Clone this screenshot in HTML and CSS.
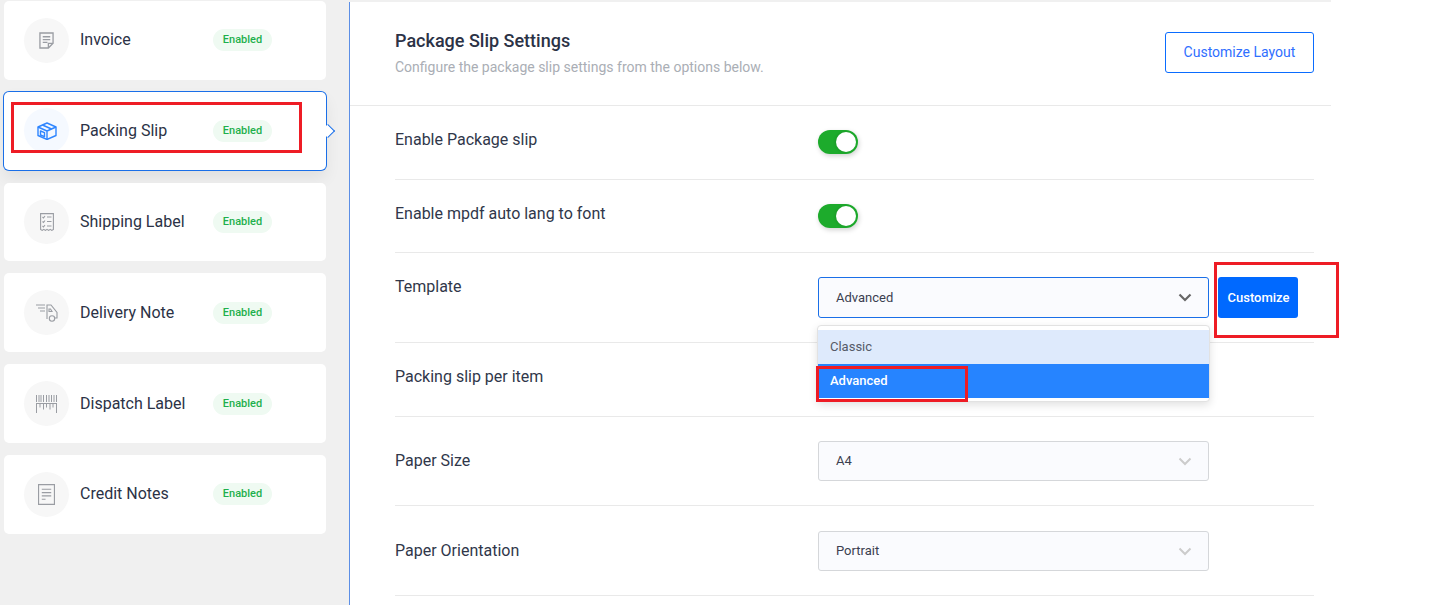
FILE: index.html
```html
<!DOCTYPE html>
<html lang="en">
<head>
<meta charset="utf-8">
<title>Package Slip Settings</title>
<link rel="stylesheet" href="styles.css">
</head>
<body>
<div class="page">
  <aside class="sidebar">
    <div class="card">
      <span class="icon"><svg viewBox="0 0 16 18" width="15" height="17" fill="none" stroke="#9a9da3" stroke-width="1.4"><path d="M1 1h14v11l-5 5H1z"/><path d="M4 5h8M4 8h8M4 11h5" /><path d="M10 17v-5h5"/></svg></span>
      <span class="name">Invoice</span><span class="badge">Enabled</span>
    </div>
    <div class="card active">
      <span class="icon"><svg viewBox="0 0 20 18" width="20" height="18" fill="none" stroke="#2f86ff" stroke-width="1.4" stroke-linejoin="round"><path d="M1 5l9-4 9 4v8.500l-9 4-9-4z"/><path d="M1 5l9 4 9-4M10 9v8.500"/><path d="M5.500 3l9 4"/><path d="M3.500 9l4 1.700v4l-4-1.700z"/></svg></span>
      <span class="name">Packing Slip</span><span class="badge">Enabled</span>
    </div>
    <div class="card">
      <span class="icon"><svg viewBox="0 0 14 18" width="14" height="18" fill="none" stroke="#9a9da3" stroke-width="1.1"><path d="M.6.6h12.800v15.800l-1.600 1-1.600-1-1.600 1-1.600-1-1.600 1-1.600-1-1.600 1-1.600-1z"/><path d="M7 4h4.500M7 8.500h4.500M7 13h4.500M2.500 4l1 1 1.500-2M2.500 8.500l1 1 1.500-2M2.500 13l1 1 1.500-2"/></svg></span>
      <span class="name">Shipping Label</span><span class="badge">Enabled</span>
    </div>
    <div class="card">
      <span class="icon"><svg viewBox="0 0 22 18" width="22" height="18" fill="none" stroke="#9a9da3" stroke-width="1.100"><path d="M0 1h9M2 4h7M4 7h5"/><path d="M11 15V1h4l6 7.500V14h-2"/><path d="M13 5h1.500l1.500 2.500h-3z"/><circle cx="16" cy="14.500" r="2.700"/></svg></span>
      <span class="name">Delivery Note</span><span class="badge">Enabled</span>
    </div>
    <div class="card">
      <span class="icon"><svg viewBox="0 0 21 18" width="21" height="18" fill="none" stroke="#9a9da3" stroke-width="1"><path d="M.5 0v7M3 0v7M5 0v7M7.500 0v7M10.500 0v7M13 0v7M15.500 0v7M18 0v7M20.500 0v7"/><path d="M0 8.500h21"/><path d="M.5 8.500V18M20.500 8.500V18M4 8.500v4M7.500 8.500v6M10.500 8.500v4M14 8.500v6M17 8.500v4"/></svg></span>
      <span class="name">Dispatch Label</span><span class="badge">Enabled</span>
    </div>
    <div class="card">
      <span class="icon"><svg viewBox="0 0 18 22" width="17" height="21" fill="none" stroke="#9a9da3" stroke-width="1.200"><path d="M.6.6h16.800v20.800H.6z"/><path d="M4 5.500h10M4 9h10M4 12.500h10M4 16h4"/></svg></span>
      <span class="name">Credit Notes</span><span class="badge">Enabled</span>
    </div>
  </aside>

  <main class="panel">
    <header class="head">
      <div>
        <h1 class="title">Package Slip Settings</h1>
        <p class="sub">Configure the package slip settings from the options below.</p>
      </div>
      <button class="outline">Customize Layout</button>
    </header>
    <div class="rows">
      <div class="row r-toggle"><span class="label">Enable Package slip</span><span class="toggle"></span></div>
      <div class="row r-toggle2"><span class="label">Enable mpdf auto lang to font</span><span class="toggle"></span></div>
      <div class="row r-template">
        <span class="label">Template</span>
        <div class="control">
          <div class="select open">Advanced<svg class="chev" viewBox="0 0 14 9" width="14" height="9"><path d="M1.500 1.500L7 7l5.500-5.500" fill="none" stroke="#666" stroke-width="2.200"/></svg></div>
          <button class="solid">Customize</button>
          <div class="menu">
            <div class="opt hover">Classic</div>
            <div class="opt sel">Advanced</div>
          </div>
        </div>
      </div>
      <div class="row r-item"><span class="label">Packing slip per item</span></div>
      <div class="row r-size">
        <span class="label">Paper Size</span>
        <div class="select">A4<svg class="chev" viewBox="0 0 14 9" width="14" height="9"><path d="M1.500 1.500L7 7l5.500-5.500" fill="none" stroke="#ccc" stroke-width="2"/></svg></div>
      </div>
      <div class="row r-orient">
        <span class="label">Paper Orientation</span>
        <div class="select">Portrait<svg class="chev" viewBox="0 0 14 9" width="14" height="9"><path d="M1.500 1.500L7 7l5.500-5.500" fill="none" stroke="#ccc" stroke-width="2"/></svg></div>
      </div>
    </div>
  </main>

  <i class="mark m1"></i>
  <i class="mark m2"></i>
  <i class="mark m3"></i>
</div>
</body>
</html>
```

FILE: styles.css
```css
* { box-sizing: border-box; }
html, body { margin: 0; height: 100%; background: #fff; }
body { font-family: Roboto, "Liberation Sans", sans-serif; color: #2b3246; overflow: hidden; }
.page { position: relative; display: flex; width: 1451px; height: 605px; overflow: hidden; }

.sidebar {
  position: relative; width: 350px; height: 605px; flex: none;
  background: #f0f0f0;
  padding: 1px 0 0 4px;
  display: flex; flex-direction: column; gap: 12px;
}
.sidebar::after {
  content: ""; position: absolute; right: 0; top: 2px; bottom: 0; width: 1px; background: #5c8fe6;
}
.card {
  position: relative; width: 322px; height: 78.800px; flex: none;
  background: #fff; border-radius: 5px;
  display: flex; align-items: center; padding-left: 20px;
}
.card.active {
  height: 78px; margin-bottom: .8px;
  box-shadow: 0 0 0 1px #1a6fe8, 0 8px 16px rgba(0,0,0,.07);
}
.card.active::after {
  content: ""; position: absolute; right: -6.500px; top: 34.500px;
  width: 9px; height: 9px; background: #fff;
  border-top: 1px solid #1a6fe8; border-right: 1px solid #1a6fe8;
  transform: rotate(45deg);
}
.icon {
  width: 45px; height: 45px; flex: none; border-radius: 50%;
  background: #f7f7f7; display: flex; align-items: center; justify-content: center;
}
.active .icon { background: #f5f9ff; }
.name { width: 144px; padding-left: 11px; font-size: 16px; line-height: 20px; flex: none; }
.badge {
  width: 59px; height: 22px; border-radius: 11px; background: #effaf2; color: #1eb04c;
  font-size: 11px; font-weight: 500; line-height: 21px; text-align: center; flex: none;
}

.panel { width: 981px; flex: none; border-top: 2px solid #f0f0f0; }
.head {
  height: 104px; padding: 29px 17px 0 45px; border-bottom: 1px solid #e9e9e9;
  display: flex; justify-content: space-between; align-items: flex-start;
}
.title { margin: 0; font-size: 18px; font-weight: 500; line-height: 20px; color: #2b3246; }
.sub { margin: 7px 0 0; font-size: 14px; line-height: 18px; color: #aaaeb5; }
.outline {
  width: 149px; height: 41px; margin-top: 1px; padding: 0 0 2px; background: #fff; border: 1px solid #0a6cff; border-radius: 3px;
  color: #2f6fff; font: 400 14px Roboto, sans-serif;
}

.rows { margin: 0 17px 0 45px; }
.row {
  display: grid; grid-template-columns: 423px 391px; align-items: start;
  border-bottom: 1px solid #e9e9e9; padding-top: 24px;
}
.r-toggle { height: 74px; }
.r-toggle2 { height: 73px; }
.r-template { height: 90px; }
.r-item { height: 74px; }
.r-size { height: 89px; }
.r-orient { height: 90px; padding-top: 25px; }
.label { font-size: 16px; line-height: 20px; color: #30374a; }
.r-size .label, .r-orient .label { padding-top: 10px; }

.toggle {
  position: relative; display: block; width: 40px; height: 24px; border-radius: 12px; background: #1dab2c;
  box-shadow: 1px 2px 5px rgba(0,0,0,.18);
}
.toggle::after {
  content: ""; position: absolute; right: 2px; top: 2px; width: 20px; height: 20px;
  border-radius: 50%; background: #fff; box-shadow: -1px 0 3px rgba(0,0,0,.12);
}

.control { position: relative; display: flex; gap: 9px; width: 480px; }
.select {
  position: relative; width: 391px; height: 40px; flex: none;
  background: #fafbfe; border: 1px solid #d5d7da; border-radius: 3px;
  padding-left: 17px; font-size: 13px; line-height: 38px; color: #3a4050;
}
.select.open { height: 41px; border-color: #1a6fe8; line-height: 39px; }
.chev { position: absolute; right: 16px; top: 15px; }
.solid {
  width: 80px; height: 41px; flex: none; background: #0069ff; border: 0; border-radius: 3px; padding: 0 0 0 1px;
  color: #fff; font: 500 13px Roboto, sans-serif;
}
.menu {
  position: absolute; left: -1px; top: 48px; width: 393px; height: 77px; z-index: 2;
  background: #fff; border: 1px solid #e2e2e2; border-radius: 4px; padding: 4px 0;
  box-shadow: 0 3px 8px rgba(0,0,0,.12);
}
.opt { height: 34px; padding-left: 12px; font-size: 13px; line-height: 34px; }
.opt.hover { background: #deeafc; color: #555b68; }
.opt.sel { background: #2684ff; color: #fff; font-weight: 500; }

.mark { position: absolute; z-index: 3; border: 3px solid #ee1c25; display: block; }
.m1 { left: 11px; top: 102px; width: 291px; height: 51px; }
.m2 { left: 1214px; top: 262px; width: 125px; height: 76px; }
.m3 { left: 816px; top: 366px; width: 152px; height: 36px; }
```
